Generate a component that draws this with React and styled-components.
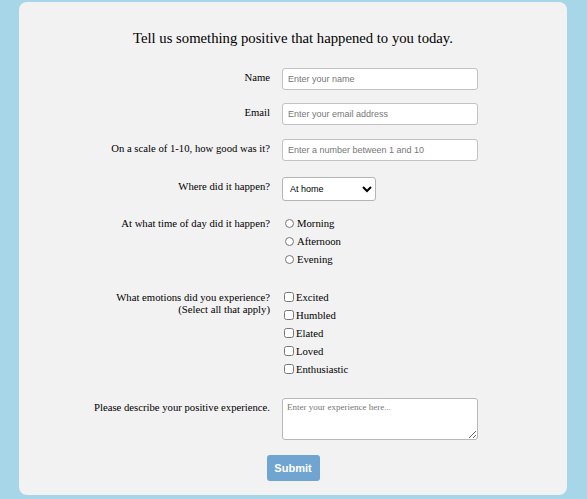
import React from 'react';
import styled, { createGlobalStyle } from 'styled-components';

const GlobalStyle = createGlobalStyle`
  html, body {
    margin: 0;
    padding: 0;
    background: #a8d6e9;
  }
  body {
    font-family: "Liberation Serif", "Times New Roman", serif;
    color: #000;
  }
`;

const Card = styled.form`
  box-sizing: border-box;
  width: 548px;
  margin: 2px 0 0 19px;
  padding: 26px 0 14px;
  background: #f2f2f2;
  border-radius: 8px;
  display: flex;
  flex-direction: column;
`;

const Title = styled.h1`
  margin: 0;
  font-size: 14.7px;
  line-height: 20px;
  font-weight: normal;
  text-align: center;
`;

const Row = styled.div`
  display: grid;
  grid-template-columns: 251px 1fr;
  column-gap: 12px;
  margin-top: ${(p) => p.$space}px;
`;

const Label = styled.label`
  font-size: 10.7px;
  line-height: 12px;
  padding-top: 3px;
  text-align: right;
`;

const TextInput = styled.input`
  box-sizing: border-box;
  width: 196px;
  height: 22px;
  padding: 0 5px;
  border: 1px solid #c2c2c2;
  border-radius: 3px;
  background: #fff;
  font-family: "Liberation Sans", Arial, sans-serif;
  font-size: 9px;
  &::placeholder {
    color: #777;
  }
`;

const Select = styled.select`
  display: block;
  box-sizing: border-box;
  width: 94px;
  height: 24px;
  padding: 0 3px;
  border: 1px solid #b5b5b5;
  border-radius: 3px;
  background: #fff;
  font-family: "Liberation Sans", Arial, sans-serif;
  font-size: 9px;
  color: #000;
`;

const Options = styled.div`
  display: flex;
  flex-direction: column;
`;

const Option = styled.label`
  display: flex;
  align-items: center;
  height: 18px;
  font-size: 10.7px;
`;

const Radio = styled.input.attrs({ type: 'radio' })`
  width: 9px;
  height: 9px;
  margin: 0 3px 0 3px;
`;

const Check = styled.input.attrs({ type: 'checkbox' })`
  width: 10px;
  height: 10px;
  margin: 0 2px 0 2px;
`;

const TextArea = styled.textarea`
  display: block;
  box-sizing: border-box;
  width: 196px;
  height: 42px;
  padding: 3px 4px;
  border: 1px solid #b8b8b8;
  border-radius: 3px;
  background: #fff;
  font-family: "Liberation Serif", "Times New Roman", serif;
  font-size: 9px;
  &::placeholder {
    color: #777;
  }
`;

const Submit = styled.button`
  align-self: center;
  margin-top: 15px;
  width: 53px;
  height: 26px;
  border: none;
  border-radius: 3px;
  background: #6fa5d0;
  color: #fff;
  font-family: "Liberation Sans", Arial, sans-serif;
  font-weight: bold;
  font-size: 11px;
`;

const times = ['Morning', 'Afternoon', 'Evening'];
const emotions = ['Excited', 'Humbled', 'Elated', 'Loved', 'Enthusiastic'];

export default function App() {
  return (
    <>
      <GlobalStyle />
      <Card onSubmit={(e) => e.preventDefault()}>
        <Title>Tell us something positive that happened to you today.</Title>
        <Row $space={20}>
          <Label>Name</Label>
          <TextInput placeholder="Enter your name" />
        </Row>
        <Row $space={13}>
          <Label>Email</Label>
          <TextInput placeholder="Enter your email address" />
        </Row>
        <Row $space={14}>
          <Label>On a scale of 1-10, how good was it?</Label>
          <TextInput placeholder="Enter a number between 1 and 10" />
        </Row>
        <Row $space={16}>
          <Label>Where did it happen?</Label>
          <Select defaultValue="home">
            <option value="home">At home</option>
            <option value="work">At work</option>
            <option value="other">Other</option>
          </Select>
        </Row>
        <Row $space={13}>
          <Label>At what time of day did it happen?</Label>
          <Options>
            {times.map((t) => (
              <Option key={t}>
                <Radio name="time" />
                {t}
              </Option>
            ))}
          </Options>
        </Row>
        <Row $space={20}>
          <Label>
            What emotions did you experience?
            <br />
            (Select all that apply)
          </Label>
          <Options>
            {emotions.map((t) => (
              <Option key={t}>
                <Check />
                {t}
              </Option>
            ))}
          </Options>
        </Row>
        <Row $space={20}>
          <Label>Please describe your positive experience.</Label>
          <TextArea placeholder="Enter your experience here..." />
        </Row>
        <Submit type="submit">Submit</Submit>
      </Card>
    </>
  );
}
